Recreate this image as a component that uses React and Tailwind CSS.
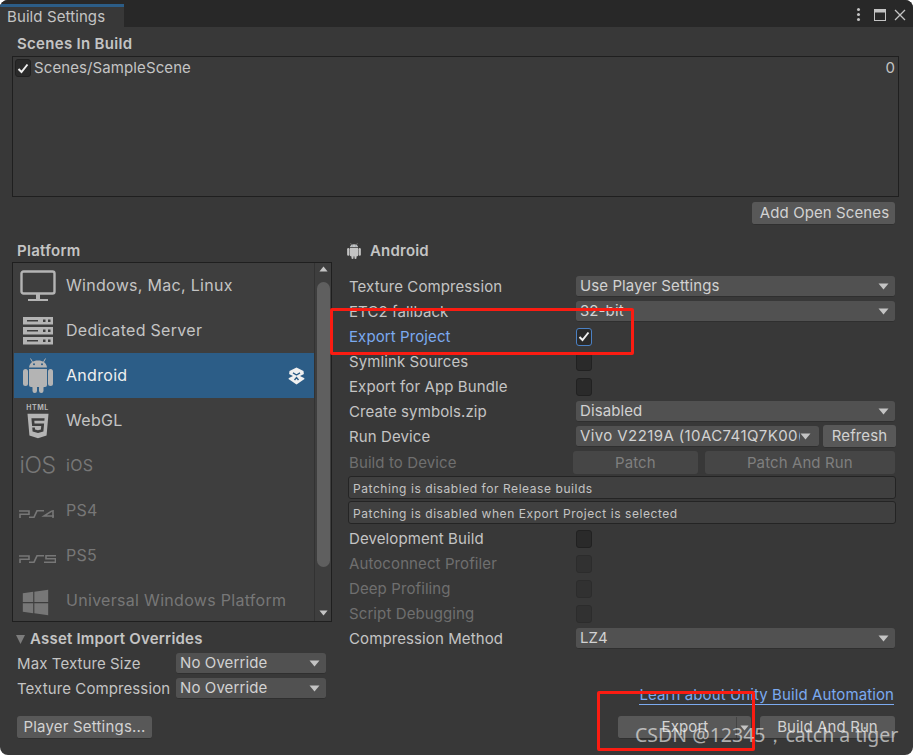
import React from "react";
import { FaWindows, FaHtml5 } from "react-icons/fa";

// Small triangle used on dropdowns and the scroll bar
const Arrow = ({ up = false, className = "" }) => (
  <svg width="11" height="7" viewBox="0 0 11 7" className={className}>
    <path d={up ? "M5.5 0.5 L10.5 6.5 L0.5 6.5 Z" : "M0.5 0.5 L10.5 0.5 L5.5 6.5 Z"} fill="currentColor" />
  </svg>
);

const Check = () => (
  <svg width="12" height="11" viewBox="0 0 12 11">
    <path d="M1.5 6 L4.5 9 L10.5 1.5" fill="none" stroke="#f0f0f0" strokeWidth="2" />
  </svg>
);

const MonitorIcon = () => (
  <svg width="36" height="32" viewBox="0 0 36 32" fill="none" stroke="#b4b4b4">
    <rect x="1.5" y="1.5" width="33" height="22" rx="2" strokeWidth="2.4" />
    <path d="M18 24 V29" strokeWidth="4" />
    <path d="M8 30 H28" strokeWidth="2" />
  </svg>
);

const ServerIcon = () => (
  <svg width="30" height="28" viewBox="0 0 30 28">
    {[0, 10, 20].map((y) => (
      <g key={y}>
        <rect x="0" y={y} width="30" height="7.5" fill="#b4b4b4" />
        <rect x="20" y={y + 2.5} width="2.5" height="2.5" fill="#3e3e3e" />
        <rect x="25" y={y + 2.5} width="2.5" height="2.5" fill="#3e3e3e" />
        <rect x="4" y={y + 3} width="11" height="1.5" fill="#3e3e3e" />
      </g>
    ))}
  </svg>
);

const AndroidIcon = ({ width = 30, height = 35, color = "#b4b4b4" }) => (
  <svg width={width} height={height} viewBox="0 0 30 35" fill={color}>
    <path d="M6 9.5 C6.5 5 10 2.5 15 2.5 C20 2.5 23.5 5 24 9.5 Z" />
    <path d="M9.5 4 L7.5 0.5 M20.5 4 L22.5 0.5" stroke={color} strokeWidth="1" />
    <circle cx="11" cy="6.3" r="1" fill="#2c5d87" />
    <circle cx="19" cy="6.3" r="1" fill="#2c5d87" />
    <path d="M6 11 H24 V27 Q24 29 22 29 H8 Q6 29 6 27 Z" />
    <rect x="0" y="11" width="5" height="17" rx="2.5" />
    <rect x="25" y="11" width="5" height="17" rx="2.5" />
    <rect x="9.5" y="27" width="4.5" height="8" rx="2.2" />
    <rect x="16" y="27" width="4.5" height="8" rx="2.2" />
  </svg>
);

const UnityIcon = () => (
  <svg width="17" height="18" viewBox="0 0 17 18">
    <path d="M8.5 0.5 L15.5 4 L16.5 12 L8.5 17.5 L0.5 12 L1.5 4 Z" fill="#f0f0f0" />
    <path d="M0 6.5 L5 9 L0 11.5 Z M17 6.5 L12 9 L17 11.5 Z" fill="#2c5d87" />
    <path d="M8.5 8 L5 5.8 M8.5 8 L12 5.8 M6.5 13 L8.5 10.5 L10.5 13" stroke="#2c5d87" strokeWidth="1.4" fill="none" />
  </svg>
);

const PsIcon = ({ last }) => (
  <svg width="37" height="8" viewBox="0 0 37 8" fill="none" stroke="#777" strokeWidth="1.6" className="mt-[7px]">
    <path d="M0 1 H10 V4.2 H1 V8" />
    <path d="M10 7.2 H15 L18 0.8 H25" />
    {last === 4 ? (
      <path d="M34 0 V8 M35 6 H25 L33 0.8" />
    ) : (
      <path d="M37 0.8 H27 V3.8 H36.5 V7.2 H25" />
    )}
  </svg>
);

const platforms = [
  { name: "Windows, Mac, Linux", icon: <MonitorIcon /> },
  { name: "Dedicated Server", icon: <ServerIcon /> },
  { name: "Android", icon: <AndroidIcon />, selected: true },
  {
    name: "WebGL",
    icon: (
      <div className="flex flex-col items-center pt-[2px] text-[#b4b4b4]">
        <span className="text-[7px] leading-[8px] font-bold tracking-[0.5px]">HTML</span>
        <FaHtml5 size={28} />
      </div>
    ),
  },
  {
    name: "iOS",
    muted: true,
    icon: <span className="text-[23px] leading-none font-light text-[#777] tracking-[-0.5px]">iOS</span>,
  },
  { name: "PS4", muted: true, icon: <PsIcon last={4} /> },
  { name: "PS5", muted: true, icon: <PsIcon last={5} /> },
  {
    name: "Universal Windows Platform",
    muted: true,
    icon: <FaWindows size={29} color="#777" className="mt-[3px] -ml-[4px]" />,
  },
];

const Dropdown = ({ value, className = "", textClass = "", arrowClass = "" }) => (
  <div className={`h-[21px] bg-[#515151] border-b border-[#2f2f2f] rounded-[3px] flex items-center pl-1 pr-[6px] text-[#d2d2d2] overflow-hidden ${className}`}>
    <span className={`flex-1 overflow-hidden whitespace-nowrap leading-[18px] -mt-px ${textClass}`}>{value}</span>
    <Arrow className={`text-[#c4c4c4] shrink-0 ${arrowClass}`} />
  </div>
);

const Button = ({ children, className = "" }) => (
  <div className={`h-[23px] pt-px bg-[#585858] border-b border-[#303030] rounded-[3px] flex items-center justify-center text-[#d2d2d2] whitespace-nowrap ${className}`}>
    {children}
  </div>
);

const Checkbox = ({ checked, active, disabled }) => (
  <div
    className={`w-[16px] h-[18px] rounded-[3px] border flex items-center justify-center ${
      active
        ? "bg-[#2a2a2a] border-[#4b81c4]"
        : disabled
          ? "bg-[#313131] border-[#2c2c2c]"
          : "bg-[#2a2a2a] border-[#212121]"
    }`}
  >
    {checked && <Check />}
  </div>
);

const Row = ({ label, tone = "text-[#c4c4c4]", children }) => (
  <div className="h-[25px] flex items-center">
    <div className={`w-[227px] shrink-0 pt-[2px] ${tone}`}>{label}</div>
    <div className="flex-1 flex items-center min-w-0">{children}</div>
  </div>
);

const HelpBox = ({ children }) => (
  <div className="h-[23px] ml-[-1px] mr-[-1px] pt-[3px] bg-[#404040] border border-[#242424] rounded-[3px] flex items-center pl-1 text-[12px] tracking-[0.56px] text-[#c4c4c4]">
    {children}
  </div>
);

const App = () => {
  return (
    <div className="relative w-[913px] h-[755px] bg-[#383838] rounded-[8px] overflow-hidden flex flex-col text-[15px] tracking-[0.1px] font-['Inter',sans-serif] text-[#c4c4c4]">
      {/* title bar */}
      <div className="h-[27px] shrink-0 bg-[#282828] flex items-stretch pt-[4px]">
        <div className="w-[124px] bg-[#383838] border-t-[3px] border-[#2c5d87] pl-[7px] flex items-center text-[#c4c4c4]">
          Build Settings
        </div>
        <div className="flex-1 flex items-center justify-end gap-[8px] pr-[7px] pb-[2px]">
          <div className="flex flex-col gap-[2px] mr-[6px]">
            <div className="w-[3px] h-[3px] rounded-full bg-[#c4c4c4]" />
            <div className="w-[3px] h-[3px] rounded-full bg-[#c4c4c4]" />
            <div className="w-[3px] h-[3px] rounded-full bg-[#c4c4c4]" />
          </div>
          <svg width="12" height="12" viewBox="0 0 12 12" fill="none">
            <rect x="0.5" y="0.5" width="11" height="11" stroke="#c4c4c4" />
            <rect x="0.5" y="0.5" width="11" height="3" fill="#c4c4c4" />
          </svg>
          <svg width="12" height="12" viewBox="0 0 12 12" fill="none" stroke="#c4c4c4" strokeWidth="1.3">
            <path d="M1 1 L11 11 M11 1 L1 11" />
          </svg>
        </div>
      </div>

      {/* scenes */}
      <div className="pl-[12px] pr-[14px] flex flex-col">
        <div className="h-[29px] pt-[8px] pl-[5px] font-semibold text-[#c4c4c4] leading-[18px] tracking-[0.3px]">Scenes In Build</div>
        <div className="h-[141px] bg-[#3a3a3a] border border-[#1f1f1f] pl-[2px] pr-[3px] flex items-start justify-between">
          <div className="flex items-center gap-[3px]">
            <Checkbox checked />
            <span>Scenes/SampleScene</span>
          </div>
          <span>0</span>
        </div>
        <div className="flex justify-end mt-[5px] mr-[4px]">
          <Button className="w-[143px] pl-[2px]">Add Open Scenes</Button>
        </div>
      </div>

      {/* main area */}
      <div className="flex-1 min-h-0 flex mt-[17px] pb-[16px]">
        {/* left column */}
        <div className="w-[332px] shrink-0 pl-[12px] flex flex-col">
          <div className="h-[20px] pl-[5px] font-semibold leading-[18px] tracking-[0.3px]">Platform</div>
          <div className="h-[360px] shrink-0 bg-[#3e3e3e] border border-[#1f1f1f] flex overflow-hidden">
            <div className="flex-1 flex flex-col pl-px">
              {platforms.map((p) => (
                <div
                  key={p.name}
                  className={`h-[45px] shrink-0 flex items-center pr-[9px] ${p.selected ? "bg-[#2c5d87] text-[#f0f0f0]" : ""} ${p.muted ? "text-[#777]" : ""}`}
                >
                  <div className="w-[52px] shrink-0 flex justify-center items-center pr-[5px]">{p.icon}</div>
                  <span className="flex-1 pb-[2px] text-[16px] tracking-[0.3px]">{p.name}</span>
                  {p.selected && <UnityIcon />}
                </div>
              ))}
            </div>
            <div className="w-[17px] shrink-0 border-l border-[#323232] flex flex-col items-center py-[3px] text-[#c4c4c4]">
              <Arrow up className="w-[9px] h-[6px]" />
              <div className="w-[13px] h-[285px] mt-[10px] rounded-full bg-[#5f5f5f]" />
              <div className="flex-1" />
              <Arrow className="w-[9px] h-[6px] mb-[2px]" />
            </div>
          </div>
          <div className="h-[20px] mt-[7px] flex items-center gap-[5px] pl-[4px] font-semibold tracking-[0.2px]">
            <svg width="9" height="9" viewBox="0 0 9 9"><path d="M0 0 H9 L4.5 9 Z" fill="#7c7c7c" /></svg>
            <span>Asset Import Overrides</span>
          </div>
          <div className="h-[25px] mt-[2px] flex items-center pl-[5px]">
            <div className="w-[159px] shrink-0 pt-[2px]">Max Texture Size</div>
            <Dropdown value="No Override" className="w-[150px]" />
          </div>
          <div className="h-[25px] flex items-center pl-[5px]">
            <div className="w-[159px] shrink-0 pt-[2px]">Texture Compression</div>
            <Dropdown value="No Override" className="w-[150px]" />
          </div>
          <div className="mt-auto pl-[5px]">
            <Button className="w-[135px] tracking-[0.2px]">Player Settings...</Button>
          </div>
        </div>

        {/* right column */}
        <div className="flex-1 min-w-0 pl-[17px] pr-[18px] flex flex-col">
          <div className="h-[20px] flex items-center gap-[9px] font-semibold tracking-[0.2px] -ml-[2px] -mt-[1px]">
            <AndroidIcon width={14} height={16} color="#c4c4c4" />
            <span>Android</span>
          </div>
          <div className="h-[13px]" />
          <Row label="Texture Compression"><Dropdown value="Use Player Settings" className="w-full" /></Row>
          <Row label="ETC2 fallback"><Dropdown value="32-bit" className="w-full" /></Row>
          <Row label="Export Project" tone="text-[#7baaf0]"><Checkbox checked active /></Row>
          <Row label="Symlink Sources"><Checkbox /></Row>
          <Row label="Export for App Bundle"><Checkbox /></Row>
          <Row label="Create symbols.zip"><Dropdown value="Disabled" className="w-full" /></Row>
          <Row label="Run Device">
            <Dropdown value="Vivo V2219A (10AC741Q7K00(" textClass="tracking-[0.4px]" arrowClass="mr-[2px]" className="w-[243px]" />
            <Button className="h-[21px] w-[73px] ml-[4px] -mr-px">Refresh</Button>
          </Row>
          <div className="h-[26px] flex items-center">
            <div className="w-[224px] shrink-0 pt-[2px] text-[#6f6f6f]">Build to Device</div>
            <div className="h-[23px] w-[125px] pt-[2px] rounded-[3px] bg-[#464646] text-[#7f7f7f] flex items-center justify-center">Patch</div>
            <div className="h-[23px] w-[191px] pt-[2px] ml-[7px] rounded-[3px] bg-[#464646] text-[#7f7f7f] flex items-center justify-center">Patch And Run</div>
          </div>
          <div className="h-[1px]" />
          <HelpBox>Patching is disabled for Release builds</HelpBox>
          <div className="h-[2px]" />
          <HelpBox>Patching is disabled when Export Project is selected</HelpBox>
          <div className="h-[2px]" />
          <Row label="Development Build"><Checkbox /></Row>
          <Row label="Autoconnect Profiler" tone="text-[#6f6f6f]"><Checkbox disabled /></Row>
          <Row label="Deep Profiling" tone="text-[#6f6f6f]"><Checkbox disabled /></Row>
          <Row label="Script Debugging" tone="text-[#6f6f6f]"><Checkbox disabled /></Row>
          <Row label="Compression Method"><Dropdown value="LZ4" className="w-full" /></Row>

          <div className="mt-auto flex flex-col items-end">
            <div className="text-[#7baaf0] border-b border-[#7baaf0] leading-[18px] mr-[1px]">Learn about Unity Build Automation</div>
            <div className="flex mt-[11px] gap-[9px]">
              <Button className="w-[133px] justify-start">
                <span className="w-[118px] pl-[16px] text-center">Export</span>
                <div className="w-px h-full bg-[#444]" />
                <Arrow className="ml-[3px] w-[9px] h-[6px] text-[#c4c4c4]" />
              </Button>
              <Button className="w-[135px]">Build And Run</Button>
            </div>
          </div>
        </div>
      </div>

      {/* red annotations and watermark on top of the screenshot */}
      <div className="absolute left-[330px] top-[308px] w-[304px] h-[47px] border-[3px] border-[#fb1c12] rounded-[2px]" />
      <div className="absolute left-[597px] top-[691px] w-[158px] h-[60px] border-[3px] border-[#fb1c12] rounded-[2px]" />
      <div className="absolute left-[635px] top-[722px] text-[19.5px] tracking-normal leading-[26px] whitespace-nowrap text-white/60 font-['Noto_Sans',sans-serif]">
        CSDN @12345，catch a tiger
      </div>
    </div>
  );
};

export default App;
